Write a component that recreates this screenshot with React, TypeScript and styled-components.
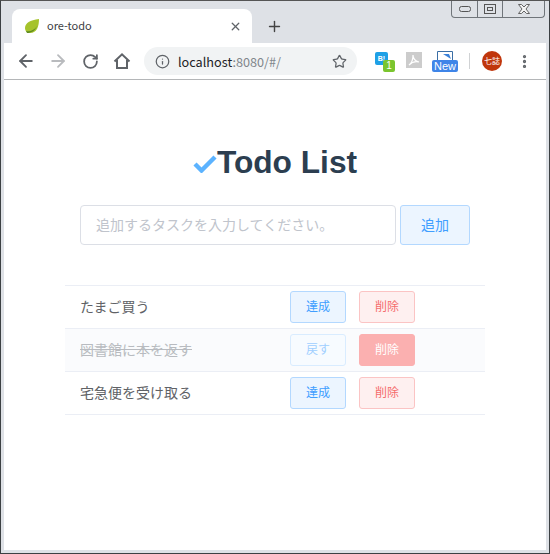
import React from 'react';
import styled, { createGlobalStyle } from 'styled-components';
import { ArrowLeft, ArrowRight, RotateCw, Info, Star, X, Plus, MoreVertical } from 'lucide-react';

const todos = [
  { id: 1, title: 'たまご買う', done: false },
  { id: 2, title: '図書館に本を返す', done: true },
  { id: 3, title: '宅急便を受け取る', done: false },
];

const App: React.FC = () => {
  return (
    <Window>
      <GlobalStyle />
      <TabStrip>
        <Tab>
          <svg width="18" height="18" viewBox="0 0 18 18">
            <path d="M2 11c0-5 5-8 14-9 0 7-2 14-9 14-3 0-5-2-5-5z" fill="#a6c32c" />
            <path d="M3 14c4 1 9-1 11-5-2 5-6 7-10 7z" fill="#5d8a22" />
          </svg>
          <TabTitle>ore-todo</TabTitle>
          <X size={13} strokeWidth={2.4} color="#5f6368" />
        </Tab>
        <NewTab>
          <Plus size={17} strokeWidth={2} color="#444" />
        </NewTab>
        <WindowControls>
          <ControlButton $width={25}>
            <svg width="12" height="6" viewBox="0 0 12 6"><rect x="0.5" y="0.5" width="11" height="5" rx="2" fill="none" stroke="#555" /></svg>
          </ControlButton>
          <ControlButton $width={25}>
            <svg width="12" height="10" viewBox="0 0 12 10"><rect x="0.5" y="0.5" width="11" height="9" fill="none" stroke="#555" /><rect x="3.5" y="3.5" width="5" height="3" fill="none" stroke="#555" /></svg>
          </ControlButton>
          <ControlButton $width={42}>
            <svg width="12" height="10" viewBox="0 0 12 10">
              <path d="M0.5 0.5h3L6 3l2.5-2.5h3L8 5l3.5 4.5h-3L6 7 3.5 9.5h-3L4 5z" fill="#f4f4f4" stroke="#555" strokeWidth="0.9" />
            </svg>
          </ControlButton>
        </WindowControls>
      </TabStrip>
      <Toolbar>
        <NavIcon><ArrowLeft size={20} strokeWidth={2.2} color="#5f6368" /></NavIcon>
        <NavIcon><ArrowRight size={20} strokeWidth={2.2} color="#b9bbbe" /></NavIcon>
        <NavIcon><RotateCw size={17} strokeWidth={2.5} color="#5f6368" /></NavIcon>
        <NavIcon>
          <svg width="18" height="18" viewBox="0 0 18 18">
            <path d="M1.5 9.5L9 2.3l7.5 7.2M4 8v8h10V8" fill="none" stroke="#5f6368" strokeWidth="2" />
          </svg>
        </NavIcon>
        <Omnibox>
          <Info size={15} strokeWidth={2} color="#5f6368" />
          <Url>localhost<UrlMuted>:8080/#/</UrlMuted></Url>
          <OmniStar><Star size={15} strokeWidth={2} color="#5f6368" /></OmniStar>
        </Omnibox>
        <Extensions>
          <ExtBadge>
            <ExtSquare>B!</ExtSquare>
            <ExtCount>1</ExtCount>
          </ExtBadge>
          <PdfIcon>
            <svg width="14" height="14" viewBox="0 0 14 14"><path d="M2 12c3-2 4-7 4-10 0 4 2 6 6 7-4-1-7 0-10 3z" fill="none" stroke="#fff" strokeWidth="1.2" /></svg>
          </PdfIcon>
          <NewExt>
            <svg width="16" height="9" viewBox="0 0 16 9"><path d="M0.5 9V0.5h15V9" fill="none" stroke="#3a6ea5" /><path d="M6 3h6l2 5z" fill="#3a80d8" /></svg>
            <NewLabel>New</NewLabel>
          </NewExt>
          <ExtDivider />
          <Avatar>七誌</Avatar>
          <MoreVertical size={17} strokeWidth={2.6} color="#5f6368" />
        </Extensions>
      </Toolbar>
      <Page>
        <Heading>
          <svg width="24" height="18" viewBox="0 0 24 18">
            <path d="M2 9l6.5 6.5L22 2" fill="none" stroke="#5cb3ff" strokeWidth="4.4" />
          </svg>
          Todo List
        </Heading>
        <AddForm>
          <TaskInput placeholder="追加するタスクを入力してください。" />
          <PlainButton $tone="primary" $width={70} $height={40}>追加</PlainButton>
        </AddForm>
        <TodoTable>
          {todos.map((todo) => (
            <TodoRow key={todo.id} $done={todo.done}>
              <TodoTitle $done={todo.done}>{todo.title}</TodoTitle>
              <RowActions>
                <PlainButton $tone="primary" $faded={todo.done}>{todo.done ? '戻す' : '達成'}</PlainButton>
                <PlainButton $tone="danger" $solid={todo.done}>削除</PlainButton>
              </RowActions>
            </TodoRow>
          ))}
        </TodoTable>
      </Page>
    </Window>
  );
};

const GlobalStyle = createGlobalStyle`
  html, body {
    margin: 0;
    padding: 0;
    background: #ffffff;
  }
  * {
    box-sizing: border-box;
  }
`;

const Window = styled.div`
  display: flex;
  flex-direction: column;
  width: 550px;
  height: 554px;
  border: 1px solid #3c4043;
  border-top-color: #555;
  background: #dee1e6;
  padding: 0 3px 3px;
  font-family: "Noto Sans CJK JP", "Noto Sans", sans-serif;
`;

const TabStrip = styled.div`
  position: relative;
  display: flex;
  align-items: flex-end;
  flex: none;
  height: 42px;
  padding-left: 8px;
`;

const Tab = styled.div`
  display: flex;
  align-items: center;
  width: 240px;
  height: 34px;
  padding: 0 10px 0 11px;
  background: #ffffff;
  border-radius: 8px 8px 0 0;
`;

const TabTitle = styled.span`
  flex: 1;
  margin: 0 0 2px 6px;
  font-size: 11px;
  color: #3c4043;
`;

const NewTab = styled.div`
  display: flex;
  align-items: center;
  justify-content: center;
  width: 30px;
  height: 34px;
  margin-left: 7px;
`;

const WindowControls = styled.div`
  position: absolute;
  top: 0;
  right: 1px;
  display: flex;
  height: 17px;
  border: 1px solid #70757a;
  border-top: none;
  border-radius: 0 0 4px 4px;
`;

const ControlButton = styled.div<{ $width: number }>`
  display: flex;
  align-items: center;
  justify-content: center;
  width: ${({ $width }) => $width}px;
  & + & {
    border-left: 1px solid #70757a;
  }
`;

const Toolbar = styled.div`
  display: flex;
  align-items: center;
  flex: none;
  height: 37px;
  padding: 0 0 0 6px;
  background: #ffffff;
  border-bottom: 1px solid #b4b6b8;
`;

const NavIcon = styled.div`
  display: flex;
  align-items: center;
  justify-content: center;
  width: 32px;
  height: 28px;
`;

const Omnibox = styled.div`
  display: flex;
  align-items: center;
  width: 213px;
  height: 28px;
  margin-left: 6px;
  padding: 0 10px 0 11px;
  background: #f1f3f4;
  border-radius: 14px;
`;

const Url = styled.span`
  margin-left: 8px;
  font-size: 12.7px;
  color: #202124;
`;

const UrlMuted = styled.span`
  color: #80868b;
`;

const OmniStar = styled.div`
  display: flex;
  margin-left: auto;
`;

const Extensions = styled.div`
  display: flex;
  align-items: center;
  margin-left: 18px;
`;

const ExtBadge = styled.div`
  position: relative;
  width: 22px;
  height: 22px;
`;

const ExtSquare = styled.div`
  width: 13px;
  height: 13px;
  margin-top: 2px;
  background: #1ea0e6;
  border-radius: 2px;
  color: #ffffff;
  font: bold 7px/13px "Liberation Sans", sans-serif;
  text-align: center;
`;

const ExtCount = styled.div`
  position: absolute;
  top: 10px;
  left: 8px;
  width: 12px;
  height: 12px;
  background: #7ac52e;
  border-radius: 2px;
  color: #ffffff;
  font: 10px/12px "Liberation Sans", sans-serif;
  text-align: center;
`;

const PdfIcon = styled.div`
  display: flex;
  align-items: center;
  justify-content: center;
  width: 16px;
  height: 16px;
  margin: 0 0 3px 9px;
  background: #cccccc;
`;

const NewExt = styled.div`
  display: flex;
  flex-direction: column;
  align-items: center;
  width: 26px;
  margin-left: 10px;
  line-height: 0;
`;

const NewLabel = styled.span`
  width: 26px;
  height: 12px;
  background: #3f85e8;
  border-radius: 2px;
  color: #ffffff;
  font: 11px/12px "Liberation Sans", sans-serif;
  text-align: center;
`;

const ExtDivider = styled.div`
  width: 1px;
  height: 16px;
  margin: 0 12px 0 11px;
  background: #d0d2d4;
`;

const Avatar = styled.div`
  width: 20px;
  height: 20px;
  margin-right: 14px;
  background: #c0360c;
  border-radius: 50%;
  color: #ffffff;
  font-size: 8px;
  line-height: 20px;
  text-align: center;
`;

const Page = styled.main`
  display: flex;
  flex-direction: column;
  align-items: center;
  flex: 1;
  padding-top: 62px;
  background: #ffffff;
`;

const Heading = styled.h1`
  display: flex;
  align-items: flex-end;
  height: 40px;
  margin: 0;
  color: #2c3e50;
  font: bold 31.7px/40px "Liberation Sans", Arial, sans-serif;
  svg {
    margin-bottom: 9px;
  }
`;

const AddForm = styled.form`
  display: flex;
  gap: 4px;
  width: 390px;
  margin-top: 23px;
`;

const TaskInput = styled.input`
  width: 316px;
  height: 40px;
  padding: 0 15px 3px;
  background: #ffffff;
  border: 1px solid #dcdfe6;
  border-radius: 4px;
  color: #606266;
  font: 14px "Noto Sans CJK JP", sans-serif;
  outline: none;
  &::placeholder {
    color: #c0c4cc;
  }
`;

const tones = {
  primary: { color: '#409eff', bg: '#ecf5ff', border: '#b3d8ff' },
  danger: { color: '#f56c6c', bg: '#fef0f0', border: '#fbc4c4' },
};

const PlainButton = styled.button<{
  $tone: keyof typeof tones;
  $width?: number;
  $height?: number;
  $faded?: boolean;
  $solid?: boolean;
}>`
  width: ${({ $width }) => $width ?? 56}px;
  height: ${({ $height }) => $height ?? 32}px;
  padding: 0 0 3px;
  border: 1px solid ${({ $tone }) => tones[$tone].border};
  border-radius: 3px;
  background: ${({ $tone }) => tones[$tone].bg};
  color: ${({ $tone }) => tones[$tone].color};
  font: ${({ $height }) => ($height ? 14 : 12)}px "Noto Sans CJK JP", sans-serif;
  ${({ $faded }) => $faded && `
    background: #f7fbff;
    border-color: #d9ecff;
    color: #a0cfff;
  `}
  ${({ $solid }) => $solid && `
    background: #fbb0b0;
    border-color: #fbb0b0;
    color: #ffffff;
  `}
`;

const TodoTable = styled.div`
  width: 420px;
  margin-top: 40px;
  border-top: 1px solid #ebeef5;
`;

const TodoRow = styled.div<{ $done: boolean }>`
  display: flex;
  align-items: center;
  justify-content: space-between;
  height: 43px;
  padding: 0 70px 0 15px;
  background: ${({ $done }) => ($done ? '#fafbfd' : '#ffffff')};
  border-bottom: 1px solid #ebeef5;
`;

const TodoTitle = styled.span<{ $done: boolean }>`
  margin-bottom: 3px;
  color: ${({ $done }) => ($done ? '#b8bbc0' : '#606266')};
  font-size: 14px;
  text-decoration: ${({ $done }) => ($done ? 'line-through' : 'none')};
`;

const RowActions = styled.div`
  display: flex;
  gap: 13px;
`;

export default App;
